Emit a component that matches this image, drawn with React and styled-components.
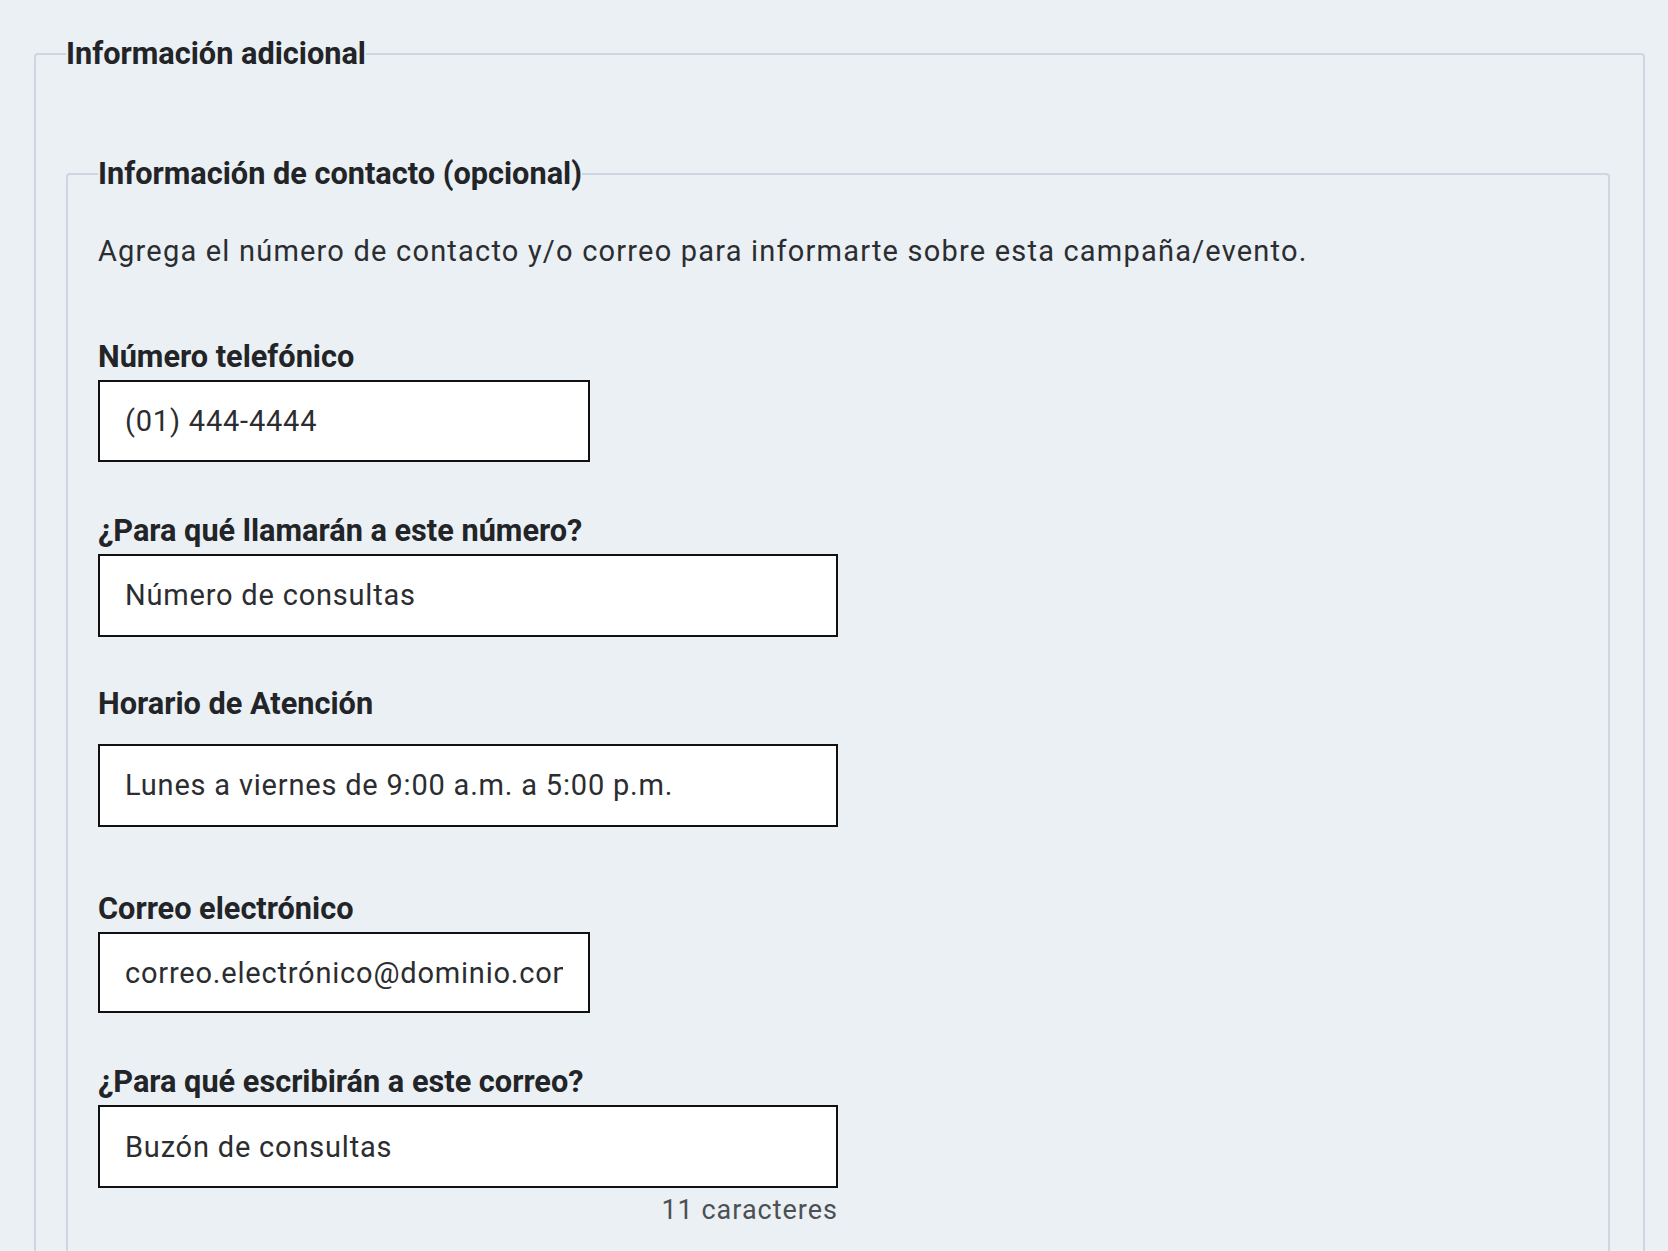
import React from "react";
import styled, { createGlobalStyle } from "styled-components";

const Global = createGlobalStyle`
  html, body {
    margin: 0;
    padding: 0;
    background: #eaf0f4;
  }
  body {
    font-family: Roboto, "Noto Sans", "Liberation Sans", sans-serif;
    color: #222427;
  }
`;

const Page = styled.div`
  padding: 34px 23px 0 34px;
  box-sizing: border-box;
  overflow: hidden;
  height: 1251px;
`;

const Fieldset = styled.fieldset`
  margin: 0;
  border: 2px solid #cdd6e1;
  border-radius: 4px;
  padding: ${(p) => p.$pad};
  min-width: 0;
`;

const Legend = styled.legend`
  padding: 0;
  font-size: 30.7px;
  line-height: 40px;
  font-weight: 700;
  color: #222427;
`;

const Spacer = styled.div`
  height: ${(p) => p.$h}px;
`;

const Description = styled.p`
  margin: 37px 0 0;
  font-size: 29px;
  line-height: 40px;
  color: #2b2d30;
  letter-spacing: 1.2px;
`;

const FieldGroup = styled.div`
  display: flex;
  flex-direction: column;
  align-items: flex-start;
  margin-top: ${(p) => p.$top}px;
`;

const Label = styled.label`
  font-size: 30.7px;
  line-height: 40px;
  font-weight: 700;
  color: #222427;
  margin-bottom: ${(p) => p.$gap}px;
`;

const TextInput = styled.input`
  box-sizing: border-box;
  width: ${(p) => (p.$wide ? 740 : 492)}px;
  height: ${(p) => (p.$wide ? 83 : 81.5)}px;
  border: 2.5px solid #111;
  border-radius: 0;
  background: #fff;
  padding: 0 25px;
  font-family: Roboto, "Noto Sans", "Liberation Sans", sans-serif;
  font-size: 29px;
  letter-spacing: 0.8px;
  color: #2b2d30;
  outline: none;
`;

const Counter = styled.div`
  width: 740px;
  text-align: right;
  font-size: 27px;
  line-height: 32px;
  letter-spacing: 1px;
  color: #4c5055;
  margin-top: 6px;
  box-sizing: border-box;
`;

const fields = [
  { id: "tel", label: "Número telefónico", value: "(01) 444-4444", top: 66, gap: 3, wide: false },
  { id: "tel-why", label: "¿Para qué llamarán a este número?", value: "Número de consultas", top: 49, gap: 3, wide: true },
  { id: "hours", label: "Horario de Atención", value: "Lunes a viernes de 9:00 a.m. a 5:00 p.m.", top: 47, gap: 20, wide: true },
  { id: "mail", label: "Correo electrónico", value: "correo.electrónico@dominio.com", top: 62.4, gap: 3, wide: false },
  { id: "mail-why", label: "¿Para qué escribirán a este correo?", value: "Buzón de consultas", top: 48.8, gap: 3, wide: true, counter: "11 caracteres" },
];

export default function App() {
  return (
    <>
      <Global />
      <Page>
        <Fieldset $pad="0 33px 0 30px">
          <Legend>Información adicional</Legend>
          <Spacer $h={80} />
          <Fieldset $pad="0 30px 120px 30px">
            <Legend>Información de contacto (opcional)</Legend>
            <Description>
              Agrega el número de contacto y/o correo para informarte sobre esta campaña/evento.
            </Description>
            {fields.map((f) => (
              <FieldGroup key={f.id} $top={f.top}>
                <Label htmlFor={f.id} $gap={f.gap}>
                  {f.label}
                </Label>
                <TextInput id={f.id} $wide={f.wide} defaultValue={f.value} readOnly />
                {f.counter && <Counter>{f.counter}</Counter>}
              </FieldGroup>
            ))}
          </Fieldset>
        </Fieldset>
      </Page>
    </>
  );
}
